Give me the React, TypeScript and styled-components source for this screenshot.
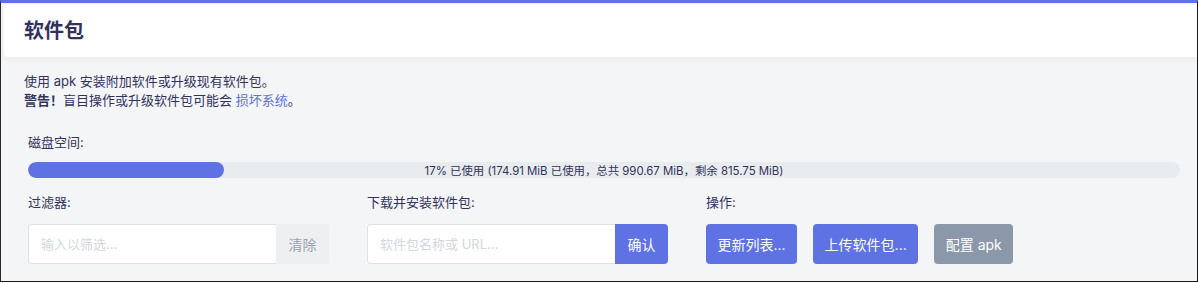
import React from "react";
import styled, { createGlobalStyle } from "styled-components";

const Global = createGlobalStyle`
  html, body { margin: 0; padding: 0; background: #ffffff; }
  * { box-sizing: border-box; }
  body { font-family: "Inter", "Noto Sans CJK SC", sans-serif; color: #32325d; }
`;

const primary = "#5e72e4";

const Frame = styled.div`
  width: 1198px;
  height: 282px;
  background: #f4f5f7;
  border-top: 3px solid ${primary};
  border-left: 1px solid #2a2a2a;
  border-right: 1px solid #1a1a1a;
  border-bottom: 1px solid #1a1a1a;
  overflow: hidden;
  display: flex;
  flex-direction: column;
`;

const Header = styled.header`
  margin: 1px 0 0 3px;
  height: 53px;
  background: #ffffff;
  border-radius: 0 0 0 4px;
  box-shadow: 0 2px 8px rgba(0, 0, 0, 0.05);
  display: flex;
  align-items: center;
  padding-left: 20px;
  padding-bottom: 2px;
`;

const Title = styled.h2`
  margin: 0;
  font-size: 20px;
  font-weight: 700;
  color: #32325d;
  letter-spacing: 0;
`;

const Content = styled.div`
  padding: 15px 0 0 23px;
`;

const Desc = styled.p`
  margin: 0;
  font-size: 13px;
  line-height: 19px;
  color: #32325d;
`;

const Strong = styled.strong`
  font-weight: 700;
`;

const Link = styled.a`
  color: ${primary};
  text-decoration: none;
`;

const Section = styled.div`
  padding: 23px 17px 0 4px;
`;

const Label = styled.div`
  font-size: 13px;
  line-height: 19px;
  color: #32325d;
`;

const Bar = styled.div`
  margin-top: 10px;
  position: relative;
  height: 16px;
  border-radius: 8px;
  background: #e9ecef;
  overflow: hidden;
`;

const Fill = styled.div`
  height: 100%;
  background: ${primary};
  border-radius: 8px;
`;

const BarText = styled.div`
  position: absolute;
  inset: 0;
  display: flex;
  align-items: center;
  justify-content: center;
  font-size: 11.4px;
  color: #32325d;
`;

const Grid = styled.div`
  margin-top: 15px;
  display: grid;
  grid-template-columns: 339px 339px 1fr;
`;

const Column = styled.div`
  display: flex;
  flex-direction: column;
  gap: 12px;
`;

const Group = styled.div`
  display: flex;
  width: 301px;
  height: 40px;
`;

const Input = styled.input`
  flex: 1;
  min-width: 0;
  height: 100%;
  border: 1px solid #dee2e6;
  border-right: none;
  border-radius: 4px 0 0 4px;
  background: #ffffff;
  padding: 0 12px;
  font-family: inherit;
  font-size: 13px;
  color: #32325d;
  outline: none;
  &::placeholder { color: #d3d7de; }
`;

const AddonButton = styled.button<{ $primary?: boolean }>`
  width: 53px;
  height: 100%;
  border: none;
  border-radius: 0 4px 4px 0;
  font-family: inherit;
  font-size: 14px;
  background: ${(p) => (p.$primary ? primary : "#eeeff0")};
  color: ${(p) => (p.$primary ? "#ffffff" : "#98a2b3")};
  padding: 0;
`;

const Actions = styled.div`
  display: flex;
  gap: 16px;
`;

const ActionButton = styled.button<{ $gray?: boolean }>`
  height: 40px;
  padding: 0 11.5px;
  border: none;
  border-radius: 4px;
  font-family: inherit;
  font-size: 14px;
  color: #ffffff;
  background: ${(p) => (p.$gray ? "#8b98aa" : primary)};
`;

export default function App() {
  const used = 17;
  return (
    <>
      <Global />
      <Frame>
        <Header>
          <Title>软件包</Title>
        </Header>
        <Content>
          <Desc>使用 apk 安装附加软件或升级现有软件包。</Desc>
          <Desc>
            <Strong>警告！</Strong>盲目操作或升级软件包可能会 <Link>损坏系统</Link>。
          </Desc>
          <Section>
            <Label>磁盘空间:</Label>
            <Bar>
              <Fill style={{ width: `${used}%` }} />
              <BarText>17% 已使用 (174.91 MiB 已使用，总共 990.67 MiB，剩余 815.75 MiB)</BarText>
            </Bar>
            <Grid>
              <Column>
                <Label>过滤器:</Label>
                <Group>
                  <Input placeholder="输入以筛选..." />
                  <AddonButton>清除</AddonButton>
                </Group>
              </Column>
              <Column>
                <Label>下载并安装软件包:</Label>
                <Group>
                  <Input placeholder="软件包名称或 URL..." />
                  <AddonButton $primary>确认</AddonButton>
                </Group>
              </Column>
              <Column>
                <Label>操作:</Label>
                <Actions>
                  <ActionButton>更新列表...</ActionButton>
                  <ActionButton>上传软件包...</ActionButton>
                  <ActionButton $gray>配置 apk</ActionButton>
                </Actions>
              </Column>
            </Grid>
          </Section>
        </Content>
      </Frame>
    </>
  );
}
